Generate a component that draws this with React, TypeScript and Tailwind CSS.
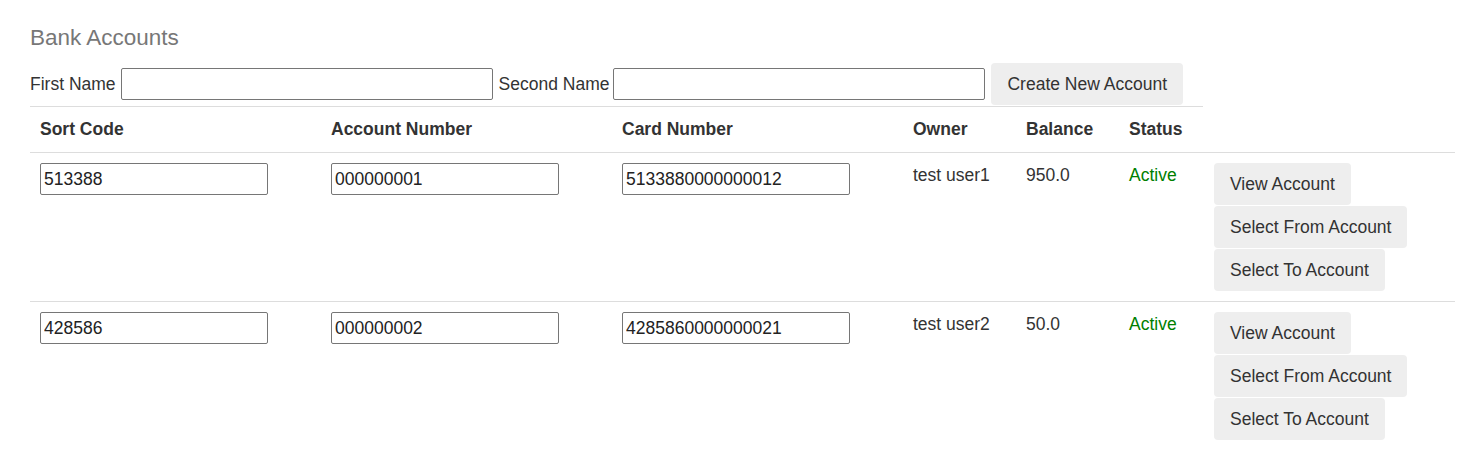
import React from 'react';

interface Account {
    sortCode: string;
    accountNumber: string;
    cardNumber: string;
    owner: string;
    balance: string;
    status: string;
}

const accounts: Account[] = [
    { sortCode: '513388', accountNumber: '000000001', cardNumber: '5133880000000012', owner: 'test user1', balance: '950.0', status: 'Active' },
    { sortCode: '428586', accountNumber: '000000002', cardNumber: '4285860000000021', owner: 'test user2', balance: '50.0', status: 'Active' },
];

const cols = 'grid grid-cols-[291px_291px_291px_113px_103px_85px_1fr]';
const btn = 'h-[42px] px-[16px] bg-[#eeeeee] rounded-[4px] text-[#333] leading-[42px] whitespace-nowrap';
const field = 'h-[32px] border border-[#767676] rounded-[2px] px-[3px] text-[17.5px] text-[#222] bg-white outline-none';

export default function App() {
    return (
        <div className="min-h-screen bg-white pl-[30px] pr-[24px] pt-[23px] font-['Liberation_Sans',Arial,sans-serif] text-[17.5px] text-[#333]">
            <h3 className="text-[22.5px] leading-[30px] text-[#777]">Bank Accounts</h3>

            <div className="mt-[10px] flex w-[1173px] items-center border-b border-[#dddddd] pb-px">
                <label className="mr-[5px]">First Name</label>
                <input type="text" className={`${field} w-[372px]`} />
                <label className="ml-[6px] mr-[4px]">Second Name</label>
                <input type="text" className={`${field} w-[372px]`} />
                <button className={`${btn} ml-[6px]`}>Create New Account</button>
            </div>

            <div className={`${cols} border-b border-[#dddddd] font-bold leading-[25px]`}>
                {['Sort Code', 'Account Number', 'Card Number', 'Owner', 'Balance', 'Status', ''].map((h, i) => (
                    <div key={i} className="pt-[10px] pb-[10px] pl-[10px]">{h}</div>
                ))}
            </div>

            {accounts.map((acc, idx) => (
                <div
                    key={acc.sortCode}
                    className={`${cols} ${idx < accounts.length - 1 ? 'border-b border-[#dddddd]' : ''} leading-[24px]`}
                >
                    <div className="py-[10px] pl-[10px]">
                        <input type="text" defaultValue={acc.sortCode} className={`${field} w-[228px]`} />
                    </div>
                    <div className="py-[10px] pl-[10px]">
                        <input type="text" defaultValue={acc.accountNumber} className={`${field} w-[228px]`} />
                    </div>
                    <div className="py-[10px] pl-[10px]">
                        <input type="text" defaultValue={acc.cardNumber} className={`${field} w-[228px]`} />
                    </div>
                    <div className="py-[10px] pl-[10px]">{acc.owner}</div>
                    <div className="py-[10px] pl-[10px]">{acc.balance}</div>
                    <div className="py-[10px] pl-[10px] text-[#008000]">{acc.status}</div>
                    <div className="py-[10px] pl-[10px] flex flex-col items-start gap-px">
                        <button className={btn}>View Account</button>
                        <button className={btn}>Select From Account</button>
                        <button className={btn}>Select To Account</button>
                    </div>
                </div>
            ))}
        </div>
    );
}
